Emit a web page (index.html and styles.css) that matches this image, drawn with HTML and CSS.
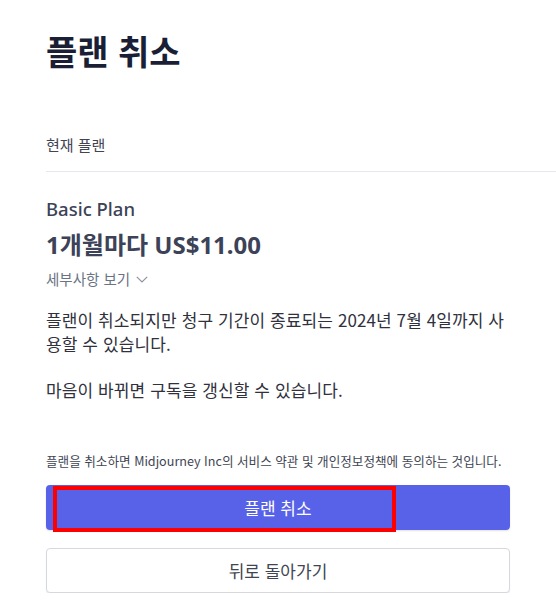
FILE: index.html
```html
<!DOCTYPE html>
<html lang="ko">
<head>
    <meta charset="UTF-8">
    <meta name="viewport" content="width=device-width, initial-scale=1.0">
    <title>플랜 취소</title>
    <link rel="stylesheet" href="styles.css">
</head>
<body>

<div class="page">
    <h1 class="page-title">플랜 취소</h1>

    <div class="section-label">현재 플랜</div>

    <div class="plan">
        <div class="plan-name">Basic Plan</div>
        <div class="plan-price">1개월마다 US$11.00</div>
        <button type="button" class="details-link">
            세부사항 보기
            <svg width="12" height="7" viewBox="0 0 12 7" fill="none">
                <path d="M0.8 0.8 L6 6 L11.2 0.8" stroke="#8c93a1" stroke-width="1.2"/>
            </svg>
        </button>

        <p class="notice">플랜이 취소되지만 청구 기간이 종료되는 2024년 7월 4일까지 사용할 수 있습니다.</p>
        <p class="notice">마음이 바뀌면 구독을 갱신할 수 있습니다.</p>
    </div>

    <p class="terms">플랜을 취소하면 Midjourney Inc의 서비스 약관 및 개인정보정책에 동의하는 것입니다.</p>

    <div class="actions">
        <div class="primary-wrap">
            <button type="button" class="btn btn-primary">플랜 취소</button>
            <span class="highlight"></span>
        </div>
        <button type="button" class="btn btn-secondary">뒤로 돌아가기</button>
    </div>
</div>

</body>
</html>
```

FILE: styles.css
```css
body {
    font-family: "Noto Sans", "Noto Sans CJK KR", sans-serif;
    background-color: #ffffff;
    color: #30313d;
    margin: 0;
    padding: 0;
}

.page {
    padding: 30px 0 0 46px;
}

.page-title {
    font-family: "Noto Sans CJK KR", sans-serif;
    font-size: 34px;
    font-weight: 700;
    line-height: 41px;
    color: #1a1f36;
    margin: 0 0 64px 0;
}

.section-label {
    font-family: "Noto Sans CJK KR", sans-serif;
    font-size: 15px;
    line-height: 20px;
    color: #414552;
    padding-bottom: 16px;
    border-bottom: 1px solid #e3e8ee;
}

.plan {
    padding-top: 25px;
}

.plan-name {
    font-size: 18.5px;
    font-weight: 500;
    line-height: 24px;
    color: #3c4257;
}

.plan-price {
    font-family: "Noto Sans", "Noto Sans CJK KR", sans-serif;
    font-size: 24px;
    font-weight: 700;
    line-height: 32px;
    color: #3c4257;
    margin-top: 8px;
}

.details-link {
    display: flex;
    align-items: center;
    gap: 6px;
    background: none;
    border: none;
    padding: 0;
    margin-top: 8px;
    font-family: "Noto Sans CJK KR", sans-serif;
    font-size: 14.5px;
    line-height: 20px;
    color: #6a7383;
    cursor: pointer;
}

.notice {
    font-family: "Noto Sans CJK KR", sans-serif;
    font-size: 17px;
    line-height: 24px;
    letter-spacing: 0.1px;
    max-width: 462px;
    margin: 19px 0 0 0;
}

.notice + .notice {
    margin-top: 22px;
}

.terms {
    font-family: "Noto Sans CJK KR", sans-serif;
    font-size: 12.6px;
    line-height: 16px;
    color: #414552;
    margin: 51px 0 0 0;
    white-space: nowrap;
}

.actions {
    width: 464px;
    margin-top: 16px;
    display: flex;
    flex-direction: column;
    gap: 18px;
}

.primary-wrap {
    position: relative;
}

.btn {
    display: block;
    width: 100%;
    height: 45px;
    border-radius: 4px;
    font-family: "Noto Sans CJK KR", sans-serif;
    font-size: 17px;
    cursor: pointer;
}

.btn-primary {
    background-color: #5862e8;
    border: none;
    color: #ffffff;
    box-shadow: 0 1px 2px rgba(0, 0, 0, 0.12);
}

.btn-secondary {
    background-color: #ffffff;
    border: 1px solid #d5d8de;
    color: #414552;
    box-shadow: 0 1px 1px rgba(0, 0, 0, 0.08);
}

.highlight {
    position: absolute;
    left: 7px;
    top: 1px;
    width: 343px;
    height: 46px;
    box-sizing: border-box;
    border: 4px solid #ff0000;
    pointer-events: none;
}
```
